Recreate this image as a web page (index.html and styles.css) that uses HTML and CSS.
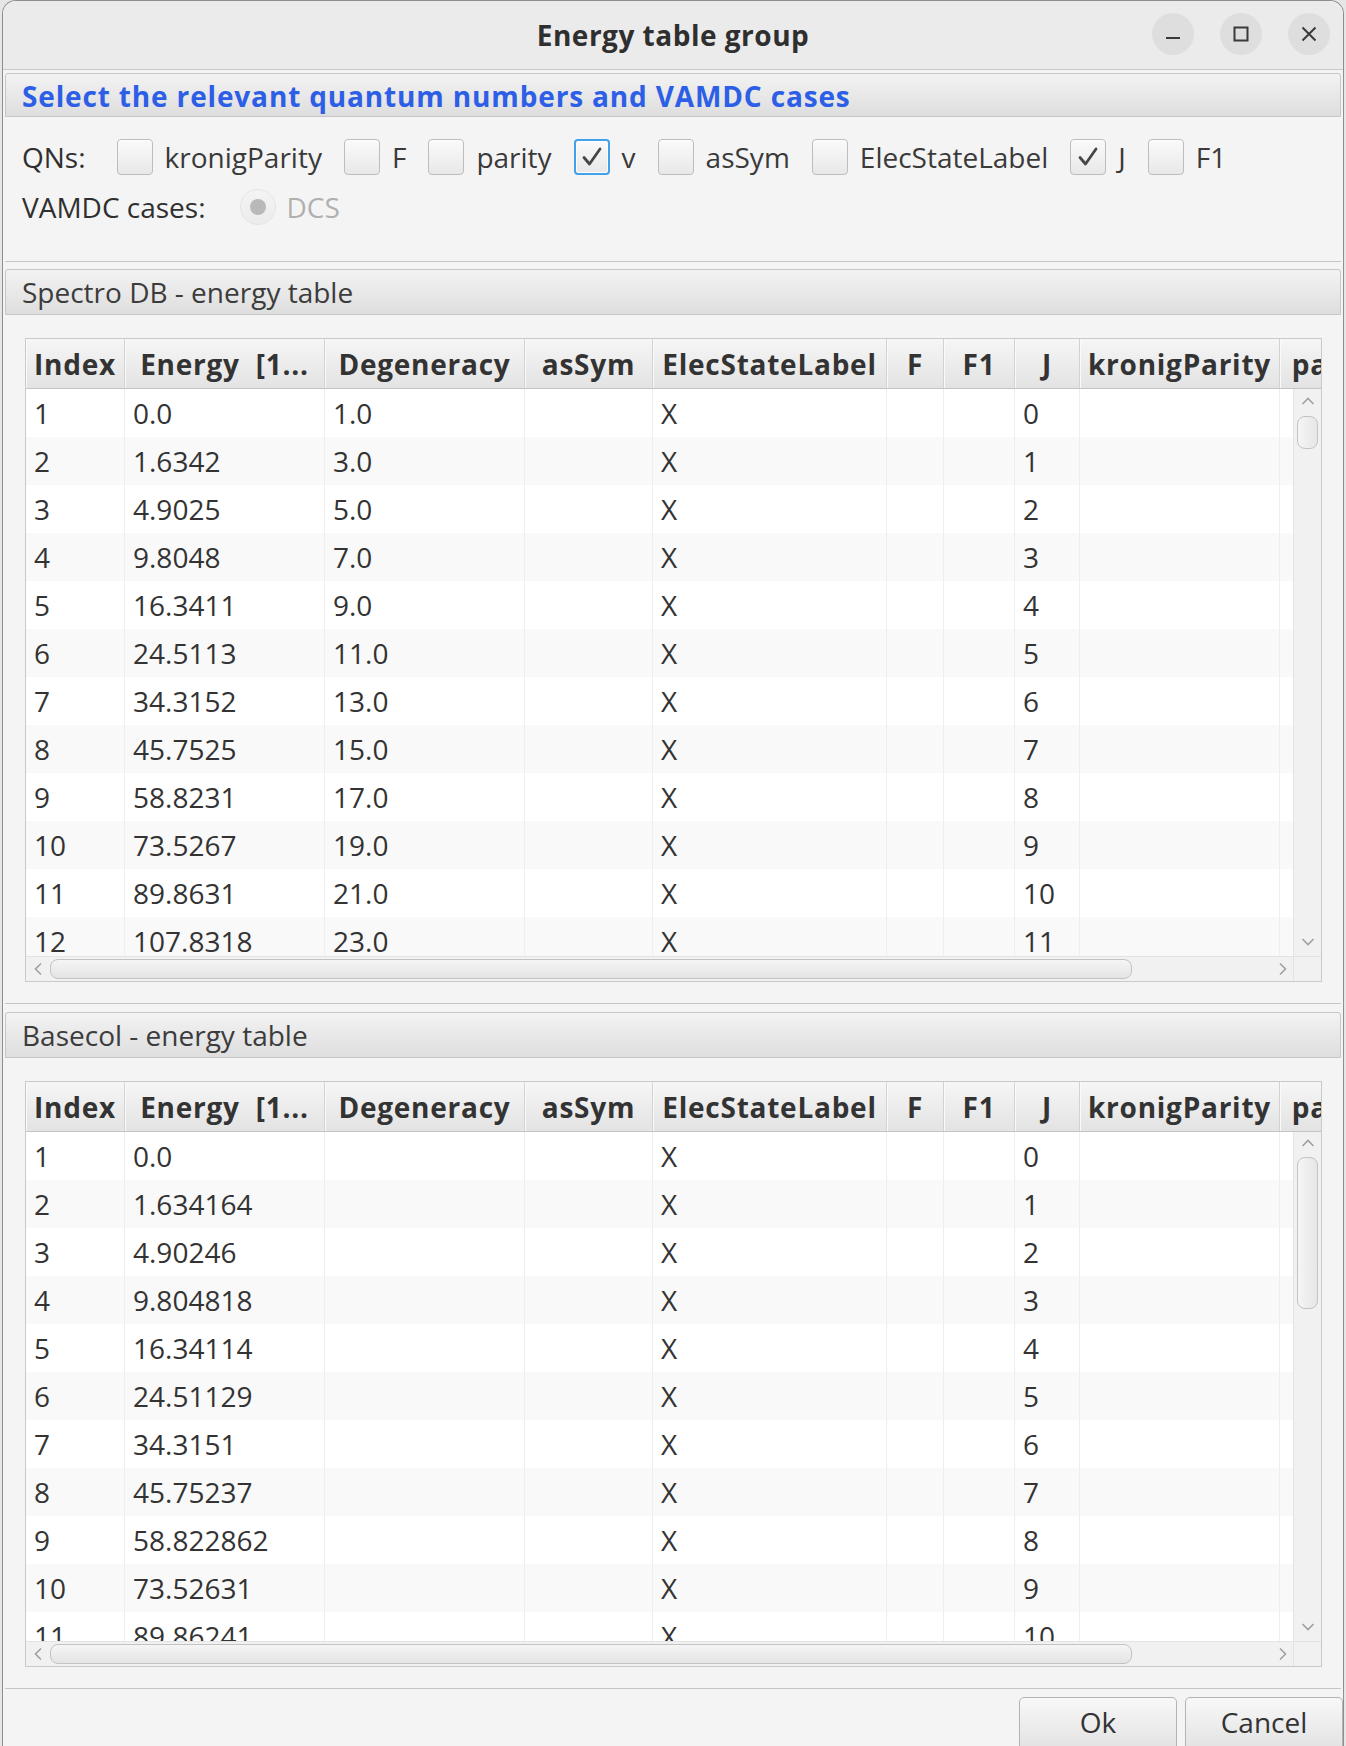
FILE: index.html
```html
<!DOCTYPE html>
<html>
<head>
<meta charset="utf-8">
<title>Energy table group</title>
<link rel="stylesheet" href="styles.css">
</head>
<body>
<div class="window">
  <header class="titlebar">
    <div class="title">Energy table group</div>
    <div class="wbtns">
      <span class="wbtn"><svg width="18" height="18" viewBox="0 0 18 18"><line x1="2" y1="13" x2="16" y2="13" stroke="#3a3a3a" stroke-width="2.2"/></svg></span>
      <span class="wbtn"><svg width="18" height="18" viewBox="0 0 18 18"><rect x="2.5" y="2.5" width="13" height="13" fill="none" stroke="#3a3a3a" stroke-width="2"/></svg></span>
      <span class="wbtn"><svg width="18" height="18" viewBox="0 0 18 18"><path d="M2.5 2.5 L15.5 15.5 M15.5 2.5 L2.5 15.5" stroke="#3a3a3a" stroke-width="2"/></svg></span>
    </div>
  </header>

  <section class="pane pane-first">
    <div class="pane-head blue">Select the relevant quantum numbers and VAMDC cases</div>
    <div class="pane-body qn-body">
      <div class="qn-row">
        <span class="lbl">QNs:</span>
        <div class="checks">
          <label class="cb"><span class="box"></span>kronigParity</label>
          <label class="cb"><span class="box"></span>F</label>
          <label class="cb"><span class="box"></span>parity</label>
          <label class="cb"><span class="box checked focused"><svg width="26" height="26" viewBox="0 0 26 26"><path d="M5 13.5 L10.5 20 L21 5" fill="none" stroke="#474747" stroke-width="2.8" stroke-linecap="round" stroke-linejoin="round"/></svg></span>v</label>
          <label class="cb"><span class="box"></span>asSym</label>
          <label class="cb"><span class="box"></span>ElecStateLabel</label>
          <label class="cb"><span class="box checked"><svg width="26" height="26" viewBox="0 0 26 26"><path d="M5 13.5 L10.5 20 L21 5" fill="none" stroke="#474747" stroke-width="2.8" stroke-linecap="round" stroke-linejoin="round"/></svg></span>J</label>
          <label class="cb"><span class="box"></span>F1</label>
        </div>
      </div>
      <div class="qn-row">
        <span class="lbl">VAMDC cases:</span>
        <label class="radio"><span class="ring"><span class="dot"></span></span>DCS</label>
      </div>
    </div>
  </section>

  <section class="pane pane-table">
    <div class="pane-head">Spectro DB - energy table</div>
    <div class="pane-body tbl-body">
      <div class="table t1">
        <div class="thead">
          <div class="th">Index</div><div class="th">Energy  [1...</div><div class="th">Degeneracy</div><div class="th">asSym</div><div class="th">ElecStateLabel</div><div class="th">F</div><div class="th">F1</div><div class="th">J</div><div class="th">kronigParity</div><div class="th">parity</div><div class="th">v</div>
        </div>
        <div class="tbody">
          <div class="tr"><div class="td">1</div><div class="td">0.0</div><div class="td">1.0</div><div class="td"></div><div class="td">X</div><div class="td"></div><div class="td"></div><div class="td">0</div><div class="td"></div><div class="td"></div><div class="td"></div></div>
          <div class="tr"><div class="td">2</div><div class="td">1.6342</div><div class="td">3.0</div><div class="td"></div><div class="td">X</div><div class="td"></div><div class="td"></div><div class="td">1</div><div class="td"></div><div class="td"></div><div class="td"></div></div>
          <div class="tr"><div class="td">3</div><div class="td">4.9025</div><div class="td">5.0</div><div class="td"></div><div class="td">X</div><div class="td"></div><div class="td"></div><div class="td">2</div><div class="td"></div><div class="td"></div><div class="td"></div></div>
          <div class="tr"><div class="td">4</div><div class="td">9.8048</div><div class="td">7.0</div><div class="td"></div><div class="td">X</div><div class="td"></div><div class="td"></div><div class="td">3</div><div class="td"></div><div class="td"></div><div class="td"></div></div>
          <div class="tr"><div class="td">5</div><div class="td">16.3411</div><div class="td">9.0</div><div class="td"></div><div class="td">X</div><div class="td"></div><div class="td"></div><div class="td">4</div><div class="td"></div><div class="td"></div><div class="td"></div></div>
          <div class="tr"><div class="td">6</div><div class="td">24.5113</div><div class="td">11.0</div><div class="td"></div><div class="td">X</div><div class="td"></div><div class="td"></div><div class="td">5</div><div class="td"></div><div class="td"></div><div class="td"></div></div>
          <div class="tr"><div class="td">7</div><div class="td">34.3152</div><div class="td">13.0</div><div class="td"></div><div class="td">X</div><div class="td"></div><div class="td"></div><div class="td">6</div><div class="td"></div><div class="td"></div><div class="td"></div></div>
          <div class="tr"><div class="td">8</div><div class="td">45.7525</div><div class="td">15.0</div><div class="td"></div><div class="td">X</div><div class="td"></div><div class="td"></div><div class="td">7</div><div class="td"></div><div class="td"></div><div class="td"></div></div>
          <div class="tr"><div class="td">9</div><div class="td">58.8231</div><div class="td">17.0</div><div class="td"></div><div class="td">X</div><div class="td"></div><div class="td"></div><div class="td">8</div><div class="td"></div><div class="td"></div><div class="td"></div></div>
          <div class="tr"><div class="td">10</div><div class="td">73.5267</div><div class="td">19.0</div><div class="td"></div><div class="td">X</div><div class="td"></div><div class="td"></div><div class="td">9</div><div class="td"></div><div class="td"></div><div class="td"></div></div>
          <div class="tr"><div class="td">11</div><div class="td">89.8631</div><div class="td">21.0</div><div class="td"></div><div class="td">X</div><div class="td"></div><div class="td"></div><div class="td">10</div><div class="td"></div><div class="td"></div><div class="td"></div></div>
          <div class="tr"><div class="td">12</div><div class="td">107.8318</div><div class="td">23.0</div><div class="td"></div><div class="td">X</div><div class="td"></div><div class="td"></div><div class="td">11</div><div class="td"></div><div class="td"></div><div class="td"></div></div>
        </div>
        <div class="vscroll">
          <div class="arrow"><svg width="14" height="10" viewBox="0 0 14 10"><path d="M1.5 8 L7 2.5 L12.5 8" fill="none" stroke="#a0a0a0" stroke-width="1.6"/></svg></div>
          <div class="vthumb" style="height:33px"></div>
          <div class="spacer"></div>
          <div class="arrow arrow-down"><svg width="14" height="10" viewBox="0 0 14 10"><path d="M1.5 2 L7 7.5 L12.5 2" fill="none" stroke="#a0a0a0" stroke-width="1.6"/></svg></div>
        </div>
        <div class="hscroll">
          <div class="harrow"><svg width="10" height="14" viewBox="0 0 10 14"><path d="M8 1.5 L2.5 7 L8 12.5" fill="none" stroke="#a0a0a0" stroke-width="1.6"/></svg></div>
          <div class="hthumb" style="width:1082px"></div>
          <div class="spacer"></div>
          <div class="harrow harrow-right"><svg width="10" height="14" viewBox="0 0 10 14"><path d="M2 1.5 L7.5 7 L2 12.5" fill="none" stroke="#a0a0a0" stroke-width="1.6"/></svg></div>
        </div>
        <div class="corner"></div>
      </div>
    </div>
  </section>

  <section class="pane pane-table pane-last">
    <div class="pane-head">Basecol - energy table</div>
    <div class="pane-body tbl-body">
      <div class="table t2">
        <div class="thead">
          <div class="th">Index</div><div class="th">Energy  [1...</div><div class="th">Degeneracy</div><div class="th">asSym</div><div class="th">ElecStateLabel</div><div class="th">F</div><div class="th">F1</div><div class="th">J</div><div class="th">kronigParity</div><div class="th">parity</div><div class="th">v</div>
        </div>
        <div class="tbody">
          <div class="tr"><div class="td">1</div><div class="td">0.0</div><div class="td"></div><div class="td"></div><div class="td">X</div><div class="td"></div><div class="td"></div><div class="td">0</div><div class="td"></div><div class="td"></div><div class="td"></div></div>
          <div class="tr"><div class="td">2</div><div class="td">1.634164</div><div class="td"></div><div class="td"></div><div class="td">X</div><div class="td"></div><div class="td"></div><div class="td">1</div><div class="td"></div><div class="td"></div><div class="td"></div></div>
          <div class="tr"><div class="td">3</div><div class="td">4.90246</div><div class="td"></div><div class="td"></div><div class="td">X</div><div class="td"></div><div class="td"></div><div class="td">2</div><div class="td"></div><div class="td"></div><div class="td"></div></div>
          <div class="tr"><div class="td">4</div><div class="td">9.804818</div><div class="td"></div><div class="td"></div><div class="td">X</div><div class="td"></div><div class="td"></div><div class="td">3</div><div class="td"></div><div class="td"></div><div class="td"></div></div>
          <div class="tr"><div class="td">5</div><div class="td">16.34114</div><div class="td"></div><div class="td"></div><div class="td">X</div><div class="td"></div><div class="td"></div><div class="td">4</div><div class="td"></div><div class="td"></div><div class="td"></div></div>
          <div class="tr"><div class="td">6</div><div class="td">24.51129</div><div class="td"></div><div class="td"></div><div class="td">X</div><div class="td"></div><div class="td"></div><div class="td">5</div><div class="td"></div><div class="td"></div><div class="td"></div></div>
          <div class="tr"><div class="td">7</div><div class="td">34.3151</div><div class="td"></div><div class="td"></div><div class="td">X</div><div class="td"></div><div class="td"></div><div class="td">6</div><div class="td"></div><div class="td"></div><div class="td"></div></div>
          <div class="tr"><div class="td">8</div><div class="td">45.75237</div><div class="td"></div><div class="td"></div><div class="td">X</div><div class="td"></div><div class="td"></div><div class="td">7</div><div class="td"></div><div class="td"></div><div class="td"></div></div>
          <div class="tr"><div class="td">9</div><div class="td">58.822862</div><div class="td"></div><div class="td"></div><div class="td">X</div><div class="td"></div><div class="td"></div><div class="td">8</div><div class="td"></div><div class="td"></div><div class="td"></div></div>
          <div class="tr"><div class="td">10</div><div class="td">73.52631</div><div class="td"></div><div class="td"></div><div class="td">X</div><div class="td"></div><div class="td"></div><div class="td">9</div><div class="td"></div><div class="td"></div><div class="td"></div></div>
          <div class="tr"><div class="td">11</div><div class="td">89.86241</div><div class="td"></div><div class="td"></div><div class="td">X</div><div class="td"></div><div class="td"></div><div class="td">10</div><div class="td"></div><div class="td"></div><div class="td"></div></div>
        </div>
        <div class="vscroll">
          <div class="arrow arrow-up2"><svg width="14" height="10" viewBox="0 0 14 10"><path d="M1.5 8 L7 2.5 L12.5 8" fill="none" stroke="#a0a0a0" stroke-width="1.6"/></svg></div>
          <div class="vthumb" style="height:152px"></div>
          <div class="spacer"></div>
          <div class="arrow arrow-down"><svg width="14" height="10" viewBox="0 0 14 10"><path d="M1.5 2 L7 7.5 L12.5 2" fill="none" stroke="#a0a0a0" stroke-width="1.6"/></svg></div>
        </div>
        <div class="hscroll">
          <div class="harrow"><svg width="10" height="14" viewBox="0 0 10 14"><path d="M8 1.5 L2.5 7 L8 12.5" fill="none" stroke="#a0a0a0" stroke-width="1.6"/></svg></div>
          <div class="hthumb" style="width:1082px"></div>
          <div class="spacer"></div>
          <div class="harrow harrow-right"><svg width="10" height="14" viewBox="0 0 10 14"><path d="M2 1.5 L7.5 7 L2 12.5" fill="none" stroke="#a0a0a0" stroke-width="1.6"/></svg></div>
        </div>
        <div class="corner"></div>
      </div>
    </div>
  </section>

  <div class="buttonbar">
    <button class="btn">Ok</button>
    <button class="btn">Cancel</button>
  </div>
</div>
</body>
</html>
```

FILE: styles.css
```css
* { box-sizing: border-box; }
html, body { margin: 0; padding: 0; }
body {
  width: 1346px;
  height: 1746px;
  overflow: hidden;
  background: #e6e6e6;
  font-family: "Open Sans", "Noto Sans", sans-serif;
  font-size: 28px;
  color: #333;
}
.window {
  margin: 0 2px;
  height: 1746px;
  background: #f4f4f4;
  border: 1px solid #8e8e8e;
  border-bottom: 0;
  border-radius: 14px 14px 0 0;
  overflow: hidden;
  display: flex;
  flex-direction: column;
}
.titlebar {
  flex: none;
  height: 69px;
  display: grid;
  grid-template-columns: 1fr auto 1fr;
  align-items: center;
  background: #ebebeb;
  border-bottom: 1px solid #c9c9c9;
}
.title {
  grid-column: 2;
  font-weight: bold;
  color: #2f2f2f;
  letter-spacing: 0.5px;
  margin-top: -1px;
}
.wbtns {
  grid-column: 3;
  justify-self: end;
  display: flex;
  gap: 26px;
  margin-right: 13px;
  margin-top: -2px;
}
.wbtn {
  width: 42px;
  height: 42px;
  border-radius: 50%;
  background: #dedede;
  display: flex;
  align-items: center;
  justify-content: center;
}

.pane { flex: none; margin: 0 2px; }
.pane-first { margin-top: 3px; }
.pane-table { margin-top: 7px; }
.pane-last { margin-top: 8px; }
.pane-head {
  height: 44px;
  display: flex;
  align-items: center;
  padding-left: 16px;
  border: 1px solid #c6c6c6;
  border-radius: 3px 3px 0 0;
  background: linear-gradient(#f3f3f3, #dedede);
  color: #3c3c3c;
  white-space: nowrap;
}
.pane-table .pane-head { height: 46px; }
.pane-head.blue {
  color: #2d5ee6;
  font-weight: bold;
  letter-spacing: 0.85px;
  padding-top: 2px;
}
.pane-body { border-bottom: 1px solid #c6c6c6; }

.qn-body {
  height: 145px;
  padding: 20px 17px 0;
  display: flex;
  flex-direction: column;
  gap: 10px;
}
.qn-row {
  height: 40px;
  display: flex;
  align-items: center;
  color: #2f2f2f;
}
.lbl { margin-right: 31px; white-space: nowrap; }
.checks { display: flex; align-items: center; gap: 22px; }
.cb {
  display: flex;
  align-items: center;
  gap: 12px;
  color: #3a3a3a;
  white-space: nowrap;
}
.box {
  width: 36px;
  height: 36px;
  flex: none;
  border: 1px solid #bdbdbd;
  border-radius: 4px;
  background: linear-gradient(#fafafa, #e8e8e8);
  box-shadow: inset 0 1px 0 #fff;
  display: flex;
  align-items: center;
  justify-content: center;
}
.box.focused {
  border: 2px solid #41a2e8;
  box-shadow: inset 0 0 0 1px #fff;
}
.radio {
  display: flex;
  align-items: center;
  gap: 11px;
  color: #b0b0b0;
  margin-left: 3px;
}
.ring {
  width: 36px;
  height: 36px;
  border-radius: 50%;
  border: 1px solid #e3e3e3;
  background: linear-gradient(#f4f4f4, #ebebeb);
  display: flex;
  align-items: center;
  justify-content: center;
}
.dot {
  width: 16px;
  height: 16px;
  border-radius: 50%;
  background: #b9b9b9;
}

.tbl-body { padding: 23px 19px 21px 20px; }
.table {
  --cols: 99px 200px 200px 128px 234px 57px 71px 65px 200px 113px 120px;
  border: 1px solid #c9c9c9;
  background: #fff;
  display: grid;
  grid-template-columns: minmax(0, 1fr) 28px;
}
.t1 { grid-template-rows: 50px 567px 25px; }
.t2 { grid-template-rows: 50px 509px 25px; }
.thead {
  grid-column: 1 / 3;
  grid-row: 1;
  display: grid;
  grid-template-columns: var(--cols);
  overflow: hidden;
  border-bottom: 1px solid #c4c4c4;
  background: linear-gradient(#f6f6f6, #e3e3e3);
}
.th {
  display: flex;
  align-items: center;
  justify-content: center;
  font-weight: bold;
  letter-spacing: 0.75px;
  color: #333;
  white-space: pre;
  overflow: hidden;
  border-right: 1px solid #d2d2d2;
  box-shadow: inset 1px 0 0 #fafafa;
}
.tbody {
  grid-column: 1;
  grid-row: 2;
  overflow: hidden;
}
.tr {
  display: grid;
  grid-template-columns: var(--cols);
  height: 48px;
  background: #fff;
}
.tr:nth-child(even) { background: #f9f9f9; }
.td {
  display: flex;
  align-items: center;
  padding-left: 8px;
  white-space: nowrap;
  overflow: hidden;
  color: #333;
  border-right: 1px solid #eeeeee;
}
.vscroll {
  grid-column: 2;
  grid-row: 2;
  display: flex;
  flex-direction: column;
  align-items: center;
  background: #f1f1f1;
  border-left: 1px solid #e3e3e3;
}
.arrow {
  height: 24px;
  width: 100%;
  flex: none;
  display: flex;
  align-items: center;
  justify-content: center;
}
.arrow-up2 { height: 22px; }
.arrow-down { height: 28px; }
.vthumb {
  flex: none;
  width: 21px;
  margin-top: 3px;
  border: 1px solid #c3c3c3;
  border-radius: 8px;
  background: linear-gradient(90deg, #f5f5f5, #e6e6e6);
}
.spacer { flex: 1; }
.hscroll {
  grid-column: 1;
  grid-row: 3;
  display: flex;
  align-items: center;
  background: #f1f1f1;
  border-top: 1px solid #e3e3e3;
}
.harrow {
  width: 24px;
  height: 100%;
  flex: none;
  display: flex;
  align-items: center;
  justify-content: center;
}
.harrow-right { width: 20px; }
.hthumb {
  flex: none;
  height: 20px;
  border: 1px solid #c3c3c3;
  border-radius: 8px;
  background: linear-gradient(#f5f5f5, #e4e4e4);
}
.corner {
  grid-column: 2;
  grid-row: 3;
  background: #f1f1f1;
  border-top: 1px solid #e3e3e3;
  border-left: 1px solid #e3e3e3;
}

.buttonbar {
  flex: none;
  display: flex;
  justify-content: flex-end;
  gap: 8px;
  padding-top: 8px;
}
.btn {
  width: 158px;
  height: 54px;
  border: 1px solid #b3b3b3;
  border-radius: 5px;
  background: linear-gradient(#f8f8f8, #e2e2e2);
  font: inherit;
  color: #333;
  padding: 0 0 4px;
}
```
